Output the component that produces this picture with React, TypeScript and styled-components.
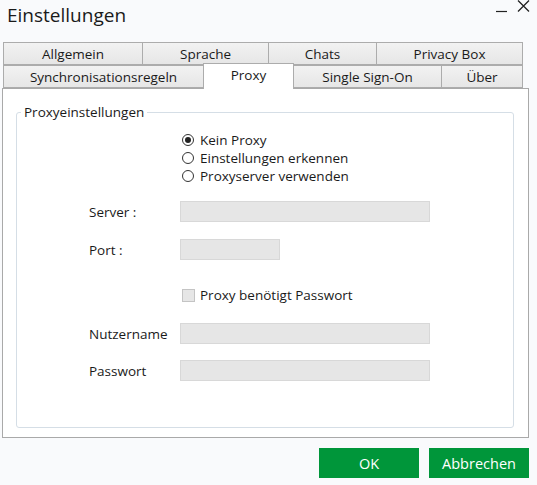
import React, { useState } from 'react';
import styled, { createGlobalStyle } from 'styled-components';

const GlobalStyle = createGlobalStyle`
  html, body {
    margin: 0;
    padding: 0;
    background: #f9fafc;
  }
  body {
    font-family: 'Open Sans', 'Noto Sans', sans-serif;
    color: #1a1a1a;
  }
`;

type TabDef = { label: string; width: number };

const rowOne: TabDef[] = [
  { label: 'Allgemein', width: 140 },
  { label: 'Sprache', width: 127 },
  { label: 'Chats', width: 109 },
  { label: 'Privacy Box', width: 147 },
];

const rowTwo: TabDef[] = [
  { label: 'Synchronisationsregeln', width: 201 },
  { label: 'Proxy', width: 91 },
  { label: 'Single Sign-On', width: 149 },
  { label: 'Über', width: 82 },
];

const proxyModes = ['Kein Proxy', 'Einstellungen erkennen', 'Proxyserver verwenden'];

const App: React.FC = () => {
  const [active, setActive] = useState('Proxy');
  const [mode, setMode] = useState(0);

  return (
    <Window>
      <GlobalStyle />
      <TitleBar>
        <Title>Einstellungen</Title>
        <Controls>
          <svg width="12" height="14" viewBox="0 0 12 14">
            <line x1="0" y1="11.5" x2="11" y2="11.5" stroke="#222" strokeWidth="1.2" />
          </svg>
          <svg width="13" height="13" viewBox="0 0 13 13">
            <path d="M1 0.5 L12 11.5 M12 0.5 L1 11.5" stroke="#222" strokeWidth="1.3" fill="none" />
          </svg>
        </Controls>
      </TitleBar>

      <TabStrip>
        <TabRow>
          {rowOne.map((t) => (
            <Tab key={t.label} $width={t.width} onClick={() => setActive(t.label)}>
              {t.label}
            </Tab>
          ))}
        </TabRow>
        <TabRow>
          {rowTwo.map((t) => (
            <Tab
              key={t.label}
              $width={t.width}
              $active={active === t.label}
              onClick={() => setActive(t.label)}
            >
              {t.label}
            </Tab>
          ))}
        </TabRow>
      </TabStrip>

      <Panel>
        <GroupBox>
          <Legend>Proxyeinstellungen</Legend>
          <Form>
            <RadioGroup>
              {proxyModes.map((m, i) => (
                <RadioRow key={m} onClick={() => setMode(i)}>
                  <Radio $checked={mode === i} />
                  {m}
                </RadioRow>
              ))}
            </RadioGroup>

            <Field $top={16}>
              <Label>Server :</Label>
              <Input $width={250} disabled />
            </Field>
            <Field $top={17}>
              <Label>Port :</Label>
              <Input $width={100} disabled />
            </Field>
            <CheckRow>
              <CheckBox />
              Proxy benötigt Passwort
            </CheckRow>
            <Field $top={19}>
              <Label>Nutzername</Label>
              <Input $width={250} disabled />
            </Field>
            <Field $top={16}>
              <Label>Passwort</Label>
              <Input $width={250} disabled type="password" />
            </Field>
          </Form>
        </GroupBox>
      </Panel>

      <Footer>
        <Button>OK</Button>
        <Button>Abbrechen</Button>
      </Footer>
    </Window>
  );
};

export default App;

const Window = styled.div`
  width: 537px;
  height: 485px;
  display: flex;
  flex-direction: column;
  background: #f9fafc;
  box-sizing: border-box;
`;

const TitleBar = styled.div`
  height: 42px;
  display: flex;
  justify-content: space-between;
  align-items: flex-start;
  padding-left: 7px;
  padding-right: 7px;
  box-sizing: border-box;
`;

const Title = styled.div`
  font-size: 19px;
  line-height: 24px;
  margin-top: 3px;
  color: #1a1a1a;
`;

const Controls = styled.div`
  display: flex;
  align-items: flex-start;
  gap: 9px;

  svg {
    display: block;
  }
`;

const TabStrip = styled.div`
  margin-left: 3px;
  display: flex;
  flex-direction: column;
  position: relative;
  z-index: 1;
`;

const TabRow = styled.div`
  display: flex;
  align-items: flex-end;
  height: 23px;
`;

const Tab = styled.div<{ $width: number; $active?: boolean }>`
  width: ${(p) => p.$width}px;
  height: ${(p) => (p.$active ? 26 : 23)}px;
  margin-bottom: ${(p) => (p.$active ? -1 : 0)}px;
  box-sizing: border-box;
  display: flex;
  justify-content: center;
  align-items: ${(p) => (p.$active ? 'flex-start' : 'center')};
  padding-top: ${(p) => (p.$active ? 2 : 0)}px;
  font-size: 13.5px;
  color: #1a1a1a;
  background: ${(p) => (p.$active ? '#ffffff' : 'linear-gradient(#f2f2f2, #e6e6e6)')};
  border: 1px solid #acacac;
  border-bottom: ${(p) => (p.$active ? 'none' : '1px solid #acacac')};
  margin-right: -1px;
  cursor: default;
  white-space: nowrap;
`;

const Panel = styled.div`
  margin-left: 2px;
  width: 527px;
  height: 350px;
  box-sizing: border-box;
  background: #ffffff;
  border: 1px solid #a9a9a9;
  padding: 14px 14px 9px 13px;
  display: flex;
`;

const GroupBox = styled.fieldset`
  flex: 1;
  margin: 0;
  padding: 0;
  border: 1px solid #d5dee6;
  border-radius: 3px;
  min-width: 0;
`;

const Legend = styled.legend`
  margin-left: 4px;
  padding: 0 3px;
  font-size: 13.5px;
  line-height: 18px;
  color: #1a1a1a;
`;

const Form = styled.div`
  display: flex;
  flex-direction: column;
  padding-left: 72px;
  padding-top: 10px;
`;

const RadioGroup = styled.div`
  display: flex;
  flex-direction: column;
  margin-left: 93px;
`;

const RadioRow = styled.label`
  display: flex;
  align-items: center;
  height: 18px;
  font-size: 13.5px;
  gap: 6px;
  cursor: default;
`;

const Radio = styled.span<{ $checked: boolean }>`
  width: 12px;
  height: 12px;
  box-sizing: border-box;
  border-radius: 50%;
  border: 1px solid #333;
  background: #fff;
  display: flex;
  align-items: center;
  justify-content: center;

  &::after {
    content: '';
    width: 6px;
    height: 6px;
    border-radius: 50%;
    background: ${(p) => (p.$checked ? '#222' : 'transparent')};
  }
`;

const Field = styled.div<{ $top: number }>`
  display: flex;
  align-items: center;
  margin-top: ${(p) => p.$top}px;
`;

const Label = styled.span`
  width: 91px;
  font-size: 13.5px;
  color: #1a1a1a;
`;

const Input = styled.input<{ $width: number }>`
  width: ${(p) => p.$width}px;
  height: 21px;
  box-sizing: border-box;
  margin: 0;
  background: #e6e6e6;
  border: 1px solid #d8d8d8;
  outline: none;
`;

const CheckRow = styled.label`
  display: flex;
  align-items: center;
  gap: 5px;
  margin-top: 26px;
  margin-left: 93px;
  height: 18px;
  font-size: 13.5px;
`;

const CheckBox = styled.span`
  width: 13px;
  height: 13px;
  box-sizing: border-box;
  background: #e6e6e6;
  border: 1px solid #c4c4c4;
`;

const Footer = styled.div`
  display: flex;
  justify-content: flex-end;
  gap: 10px;
  padding-right: 8px;
  margin-top: 10px;
`;

const Button = styled.button`
  width: 100px;
  height: 30px;
  border: none;
  background: #00963a;
  color: #ffffff;
  font-family: 'Open Sans', 'Noto Sans', sans-serif;
  font-size: 14.5px;
  cursor: pointer;

  &:hover {
    background: #008a35;
  }
`;
